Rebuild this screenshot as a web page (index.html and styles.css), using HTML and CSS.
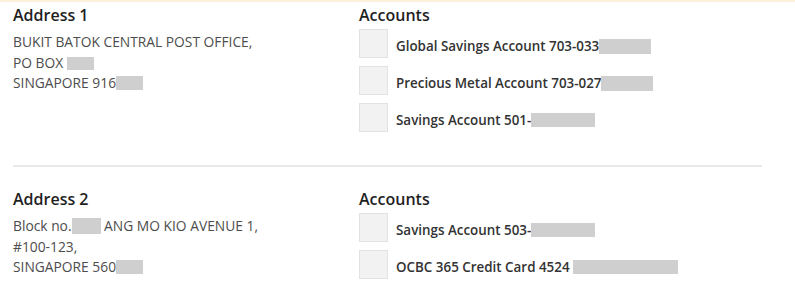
FILE: index.html
```html
<!DOCTYPE html>
<html lang="en">
<head>
  <title>Addresses and accounts</title>
  <meta charset="utf-8">
  <meta name="viewport" content="width=device-width, initial-scale=1">
  <link rel="stylesheet" href="styles.css">
</head>
<body>
  <div class="page">
    <section class="mailing">
      <div class="mailing__address">
        <h2 class="mailing__title">Address 1</h2>
        <p class="mailing__lines">
          BUKIT BATOK CENTRAL POST OFFICE,<br>
          PO BOX <span class="mask mask--po"></span><br>
          SINGAPORE 916<span class="mask mask--zip"></span>
        </p>
      </div>
      <div class="mailing__accounts">
        <h2 class="mailing__title">Accounts</h2>
        <ul class="accounts">
          <li class="accounts__item">
            <span class="accounts__check"></span>
            <span class="accounts__name">Global Savings Account 703-033<span class="mask mask--acc"></span></span>
          </li>
          <li class="accounts__item">
            <span class="accounts__check"></span>
            <span class="accounts__name">Precious Metal Account 703-027<span class="mask mask--acc"></span></span>
          </li>
          <li class="accounts__item">
            <span class="accounts__check"></span>
            <span class="accounts__name">Savings Account 501-<span class="mask mask--sav"></span></span>
          </li>
        </ul>
      </div>
    </section>

    <section class="mailing">
      <div class="mailing__address">
        <h2 class="mailing__title">Address 2</h2>
        <p class="mailing__lines">
          Block no.<span class="mask mask--block"></span> ANG MO KIO AVENUE 1,<br>
          #100-123,<br>
          SINGAPORE 560<span class="mask mask--zip"></span>
        </p>
      </div>
      <div class="mailing__accounts">
        <h2 class="mailing__title">Accounts</h2>
        <ul class="accounts">
          <li class="accounts__item">
            <span class="accounts__check"></span>
            <span class="accounts__name">Savings Account 503-<span class="mask mask--sav"></span></span>
          </li>
          <li class="accounts__item">
            <span class="accounts__check"></span>
            <span class="accounts__name">OCBC 365 Credit Card 4524 <span class="mask mask--card"></span></span>
          </li>
        </ul>
      </div>
    </section>
  </div>
</body>
</html>
```

FILE: styles.css
```css
*, *::before, *::after {
  margin: 0;
  padding: 0;
  box-sizing: border-box;
}

body {
  font-family: "Open Sans", "Liberation Sans", sans-serif;
  background-color: #ffffff;
  color: #222222;
}

.page {
  width: 795px;
  height: 295px;
  overflow: hidden;
  padding: 2px 33px 0 13px;
  border-top: 2px solid #fcf1d8;
}

.mailing {
  display: grid;
  grid-template-columns: 346px 1fr;
  padding-bottom: 33px;
}

.mailing + .mailing {
  border-top: 2px solid #e9e9e9;
  padding-top: 21px;
}

.mailing__title {
  font-size: 16px;
  font-weight: 600;
  line-height: 22px;
  color: #1f1f1f;
}

.mailing__lines {
  margin-top: 6px;
  font-size: 13.8px;
  line-height: 20.5px;
  color: #4d4d4d;
}

.accounts {
  list-style: none;
  margin-top: 3px;
  display: flex;
  flex-direction: column;
  gap: 8px;
}

.accounts__item {
  display: flex;
  align-items: flex-start;
  gap: 8px;
}

.accounts__check {
  flex: none;
  width: 29px;
  height: 29px;
  border: 1px solid #e2e2e2;
  background-color: #f2f2f2;
}

.accounts__name {
  margin-top: 8px;
  font-size: 13.4px;
  font-weight: 600;
  line-height: 18px;
  color: #333333;
}

.mask {
  display: inline-block;
  height: 13px;
  vertical-align: -2px;
  background-color: #cfcfcf;
}

.mask--po {
  width: 27px;
}

.mask--zip {
  width: 27px;
  height: 14px;
}

.mask--block {
  width: 29px;
  height: 16px;
  vertical-align: -3px;
}

.mask--acc {
  width: 52px;
  height: 15px;
  vertical-align: -3px;
}

.mask--sav {
  width: 64px;
  height: 14px;
}

.mask--card {
  width: 105px;
  height: 14px;
}
```
